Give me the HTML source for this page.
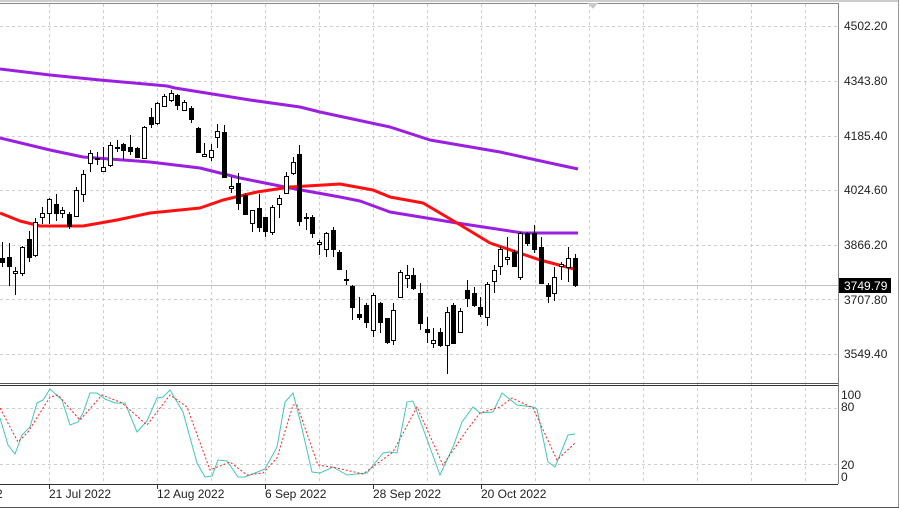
<!DOCTYPE html>
<html><head><meta charset="utf-8"><style>
html,body{margin:0;padding:0;background:#fff;width:900px;height:509px;overflow:hidden}
svg{display:block;font-family:"Liberation Sans",Arial,sans-serif}
</style></head><body>
<svg id="s" width="900" height="509" viewBox="0 0 900 509" xmlns="http://www.w3.org/2000/svg" shape-rendering="crispEdges">
<rect x="0" y="0" width="900" height="509" fill="#fff"/>
<g id="grid" stroke="#cfcfcf" stroke-dasharray="3,3" stroke-width="1"></g>
<line x1="0" y1="285.5" x2="838" y2="285.5" stroke="#c0c0c0"/>
<g id="ma" fill="none" stroke-linejoin="round" shape-rendering="auto">
<polyline stroke="#9b1fe0" stroke-width="3" points="0,69 50,75 100,80 167,86 175,88 250,100 300,107 320,112 390,127 430,140 500,152 550,163 578,169"/>
<polyline stroke="#9b1fe0" stroke-width="3" points="0,138 50,150 83,157 150,162 200,168 240,178 290,188 340,197 360,201 390,212 457,223 523,233 578,233"/>
<polyline stroke="#ff1010" stroke-width="3" points="0,213 20,221 40,226 83,226 117,220 150,213 200,208 223,200 257,192 290,187 340,184 373,190 390,197 423,203 457,223 490,243 540,260 578,270"/>
</g>
<g id="c"></g>
<g fill="none" shape-rendering="auto">
<polyline stroke="#40c8b8" stroke-width="1" points="0,418 8,445 15,454 22,435 30,427 37,403 43,400 50,389 62,400 70,425 78,422 83,413 90,393 97,393 105,399 115,403 125,403 137,432 147,421 157,398 163,397 170,390 183,412 197,463 205,477 212,476 218,460 227,461 238,477 245,477 255,473 265,469 277,447 285,402 293,393 300,420 312,472 320,473 333,467 347,475 367,473 383,453 390,452 397,453 407,402 413,401 440,475 453,447 462,422 473,407 480,413 493,412 502,393 517,405 533,407 537,409 548,462 555,467 568,435 575,434"/>
<polyline stroke="#ff2020" stroke-width="1" stroke-dasharray="2,2" points="0,408 18,442 28,432 50,397 58,395 80,420 102,395 122,403 147,425 170,395 187,407 210,470 230,462 247,475 263,473 277,458 293,405 297,405 318,465 337,468 363,474 393,452 417,407 443,465 467,430 480,413 500,407 512,398 533,408 557,460 575,443"/>
</g>
<line x1="0" y1="1" x2="898" y2="1" stroke="#999"/>
<line x1="898.5" y1="0" x2="898.5" y2="508" stroke="#999"/>
<line x1="0" y1="507.5" x2="899" y2="507.5" stroke="#555"/>
<line x1="0" y1="3.5" x2="838" y2="3.5" stroke="#888"/>
<line x1="838.5" y1="3" x2="838.5" y2="484" stroke="#888"/>
<line x1="0" y1="383.5" x2="838" y2="383.5" stroke="#555"/>
<line x1="0" y1="385.5" x2="838" y2="385.5" stroke="#333"/>
<line x1="0" y1="484.5" x2="838" y2="484.5" stroke="#333"/>
<polygon points="588,3 598,3 593,9" fill="#c8c8c8"/>
<g font-size="12" fill="#222">
<text x="844" y="30">4502.20</text>
<text x="844" y="85">4343.80</text>
<text x="844" y="140">4185.40</text>
<text x="844" y="194">4024.60</text>
<text x="844" y="249">3866.20</text>
<text x="844" y="304">3707.80</text>
<text x="844" y="358">3549.40</text>
<text x="841" y="399">100</text>
<text x="841" y="411">80</text>
<text x="841" y="469">20</text>
<text x="841" y="481">0</text>
<text x="-4" y="498">2</text>
<text x="49" y="498">21 Jul 2022</text>
<text x="157" y="498">12 Aug 2022</text>
<text x="265" y="498">6 Sep 2022</text>
<text x="373" y="498">28 Sep 2022</text>
<text x="481" y="498">20 Oct 2022</text>
</g>
<rect x="839" y="278" width="52" height="15" fill="#000"/>
<text x="844" y="290" font-size="12" fill="#fff">3749.79</text>
</svg>
<script>
var NS="http://www.w3.org/2000/svg",g=document.getElementById("grid"),c=document.getElementById("c");
function el(p,t,a){var e=document.createElementNS(NS,t);for(var k in a)e.setAttribute(k,a[k]);p.appendChild(e);return e;}
[26,81,136,190,245,299,354,408,464].forEach(function(y){el(g,"line",{x1:0,y1:y+.5,x2:838,y2:y+.5});});
for(var x=49;x<838;x+=54){el(g,"line",{x1:x+.5,y1:4,x2:x+.5,y2:484});}
[49,157,265,373,481].forEach(function(x){el(c,"line",{x1:x+.5,y1:484,x2:x+.5,y2:489,stroke:"#333"});});
var d=[
[2,258,262,242,267,0],[9,257,266,243,286,0],[15,271,273,267,295,1],[22,247,273,246,276,1],[29,239,257,231,262,0],
[35,222,255,218,257,1],[42,213,217,207,224,1],[49,199,213,198,224,1],[56,204,213,194,221,0],[62,210,213,207,218,1],
[69,214,226,212,229,0],[76,190,216,187,217,1],[83,174,194,170,202,1],[90,153,163,150,172,1],[97,158,159,152,165,1],
[103,167,171,147,172,1],[110,145,165,142,167,1],[117,147,148,140,152,1],[123,144,150,143,160,0],[130,147,151,135,155,0],
[137,148,157,147,158,0],[144,127,158,126,158,1],[151,117,124,108,128,0],[157,103,123,102,125,1],[164,96,106,94,107,1],
[171,93,100,90,102,1],[177,95,105,94,110,0],[184,102,110,100,111,1],[191,108,119,106,123,0],[198,128,152,127,153,0],
[204,154,156,143,157,1],[211,150,157,144,161,1],[217,131,137,124,148,1],[224,132,177,125,178,0],[231,186,188,177,193,1],
[238,183,203,173,210,0],[245,195,214,193,215,0],[252,210,223,210,232,1],[259,208,227,194,232,0],[265,217,231,217,237,0],
[272,207,232,205,235,1],[279,198,204,195,218,1],[286,176,193,172,193,1],[293,162,173,157,175,1],[299,154,221,145,226,0],
[306,217,218,213,230,0],[312,217,233,215,238,0],[319,242,244,240,255,1],[326,233,249,232,257,1],[333,230,249,227,257,0],
[339,252,269,250,270,0],[346,279,280,270,285,0],[352,286,307,285,320,0],[359,314,317,297,320,0],[366,305,322,303,328,0],
[373,295,330,293,337,1],[380,303,322,302,333,0],[387,318,342,318,344,0],[393,310,340,303,345,1],[400,272,297,270,297,1],
[407,275,278,265,288,1],[413,275,288,268,290,0],[420,293,323,283,330,0],[427,329,332,317,343,0],[433,340,343,328,348,1],
[440,332,345,328,347,0],[447,312,345,307,374,1],[453,305,343,303,344,0],[460,311,332,308,332,1],[467,290,298,280,307,0],
[474,293,305,287,307,0],[480,307,314,297,317,0],[487,284,317,282,326,1],[494,270,281,265,293,1],[500,249,266,247,275,1],
[507,257,259,237,265,1],[514,252,266,250,266,0],[520,233,277,232,280,1],[527,233,243,232,246,0],[534,233,249,225,253,0],
[541,247,283,237,284,0],[548,285,296,283,303,0],[554,277,293,267,301,1],[561,264,266,262,280,1],[568,258,267,247,282,1],
[575,258,285,254,287,0]];
d.forEach(function(a){
 el(c,"line",{x1:a[0]+.5,y1:a[3],x2:a[0]+.5,y2:a[4],stroke:"#000"});
 var h=Math.max(1,a[2]-a[1]);
 if(a[5]) el(c,"rect",{x:a[0]-1.5,y:a[1]+.5,width:4,height:h,fill:"#fff",stroke:"#000"});
 else el(c,"rect",{x:a[0]-2,y:a[1],width:5,height:h+1,fill:"#000"});
});
</script>
</body></html>
